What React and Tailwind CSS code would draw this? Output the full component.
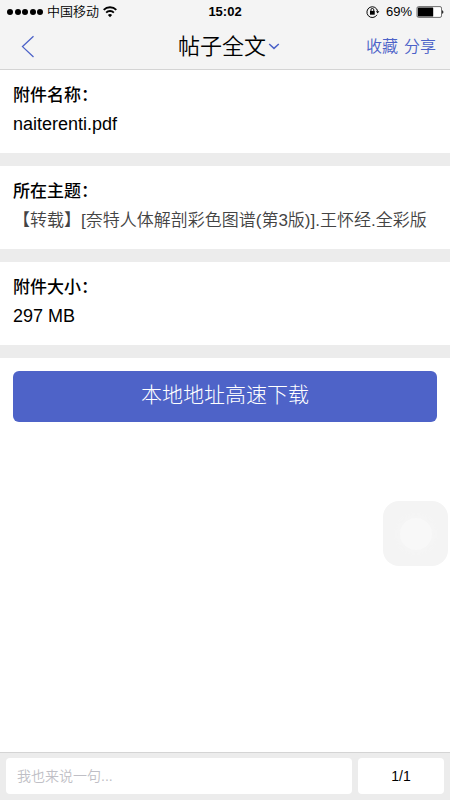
import React, { useState } from 'react';

const sections = [
  { label: '附件名称：', value: 'naiterenti.pdf', valueClass: 'text-lg/[29px] text-black' },
  {
    label: '所在主题：',
    value: '【转载】[奈特人体解剖彩色图谱(第3版)].王怀经.全彩版',
    valueClass: 'text-[17px]/[29px] text-[#444] font-[350]',
  },
  { label: '附件大小：', value: '297 MB', valueClass: 'text-lg/[29px] text-black' },
];

const WifiIcon = () => (
  <svg className="w-3.5 h-3.5" viewBox="0 0 12 12" fill="none" stroke="#000" strokeWidth="1.6" aria-hidden="true">
    <path d="M0.6 4.2a7.6 7.6 0 0 1 10.8 0" />
    <path d="M2.7 6.5a4.7 4.7 0 0 1 6.6 0" />
    <path d="M6 10.4L4.2 8.5a2.6 2.6 0 0 1 3.6 0z" fill="#000" stroke="none" />
  </svg>
);

const RotationLockIcon = () => (
  <svg className="w-3.5 h-3.5" viewBox="0 0 13 12" fill="none" stroke="#000" aria-hidden="true">
    <path d="M10.2 8.6A5 5 0 1 1 10.8 5.4" strokeWidth="0.9" />
    <path d="M9.2 5.4h3.2l-1.6 2z" fill="#000" stroke="none" />
    <rect x="3.7" y="5" width="4.4" height="3.5" fill="#000" stroke="none" />
    <path d="M4.6 5.2V4a1.3 1.3 0 0 1 2.6 0v1.2" strokeWidth="0.9" />
  </svg>
);

const BatteryIcon = () => (
  <svg className="w-7 h-3" viewBox="0 0 28 12" aria-hidden="true">
    <rect x="1" y="0.6" width="24.5" height="10.8" rx="1.5" fill="#fff" stroke="#333" strokeWidth="0.7" />
    <rect x="1.8" y="1.4" width="15.4" height="9.2" rx="0.6" fill="#000" />
    <path d="M26.2 4.2c1.5 0.3 1.5 3.3 0 3.6z" fill="#000" />
  </svg>
);

const StatusBar = () => (
  <div className="grid grid-cols-3 items-center h-6 px-1.5 text-[13px] leading-4 text-black">
    <div className="flex items-center gap-1">
      <svg className="w-[37px] h-2" viewBox="0 0 37 8" aria-hidden="true">
        {[4, 12, 19, 27, 34].map((cx) => (
          <circle key={cx} cx={cx} cy="4" r="3" />
        ))}
      </svg>
      <span className="font-[350]">中国移动</span>
      <WifiIcon />
    </div>
    <span className="text-center font-bold">15:02</span>
    <div className="flex items-center justify-end gap-1">
      <RotationLockIcon />
      <span className="pl-0.5">69%</span>
      <BatteryIcon />
    </div>
  </div>
);

const App = () => {
  const [comment, setComment] = useState('');

  return (
    <div className="min-h-screen flex flex-col bg-white text-black font-['Liberation_Sans','Noto_Sans_CJK_SC',sans-serif]">
      <header className="bg-[#f4f4f4] border-b border-[#d4d4d4]">
        <StatusBar />
        <nav className="grid grid-cols-3 items-center h-[45px] px-[14px]">
          <button type="button" aria-label="返回" className="w-8 h-8 pl-[7px] flex items-center">
            <svg className="w-4 h-6" viewBox="0 0 16 24" fill="none" stroke="#4c62c8" strokeWidth="1.3" aria-hidden="true">
              <path d="M12.5 1.2L1.5 11.6l11 10.4" />
            </svg>
          </button>
          <button type="button" className="flex items-center justify-center gap-0.5 pl-2 text-[22px] leading-7 font-[350] whitespace-nowrap">
            帖子全文
            <svg className="w-3 h-3" viewBox="0 0 12 12" fill="none" stroke="#4c62c8" strokeWidth="1.5" aria-hidden="true">
              <path d="M1.2 3L6 7.4 10.8 3" />
            </svg>
          </button>
          <div className="flex justify-end gap-1.5 text-base font-[350] text-[#4c62c8] whitespace-nowrap">
            <a href="#favorite">收藏</a>
            <a href="#share">分享</a>
          </div>
        </nav>
      </header>

      <main className="flex-1">
        {sections.map((section) => (
          <section key={section.label} className="pt-3 pb-3.5 px-[13px] border-b-[13px] border-[#ececec]">
            <h2 className="text-[17px] leading-7 font-medium">{section.label}</h2>
            <p className={section.valueClass}>{section.value}</p>
          </section>
        ))}
        <div className="p-[13px]">
          <button
            type="button"
            className="w-full h-[51px] pb-1 rounded-md bg-[#4e63c8] text-white text-[21px] font-light"
          >
            本地地址高速下载
          </button>
        </div>
      </main>

      <button
        type="button"
        aria-label="辅助触控"
        className="fixed right-0.5 bottom-[234px] w-[65px] h-[65px] rounded-2xl bg-[#f4f4f4] flex items-center justify-center"
      >
        <span className="w-8 h-8 rounded-full bg-[#f8f8f8] shadow-[0_0_6px_2px_#f6f6f6]"></span>
      </button>

      <footer className="flex gap-1.5 px-1.5 pt-[5px] pb-1.5 bg-[#ececec] border-t border-[#d4d4d4]">
        <input
          type="text"
          aria-label="回复"
          placeholder="我也来说一句..."
          value={comment}
          onChange={(e) => setComment(e.target.value)}
          className="flex-1 min-w-0 h-9 px-[11px] rounded-sm bg-white text-sm font-[350] outline-none placeholder:text-[#bfbfc6]"
        />
        <button type="button" className="w-[86px] h-9 rounded-sm bg-white text-sm">
          1/1
        </button>
      </footer>
    </div>
  );
};

export default App;
